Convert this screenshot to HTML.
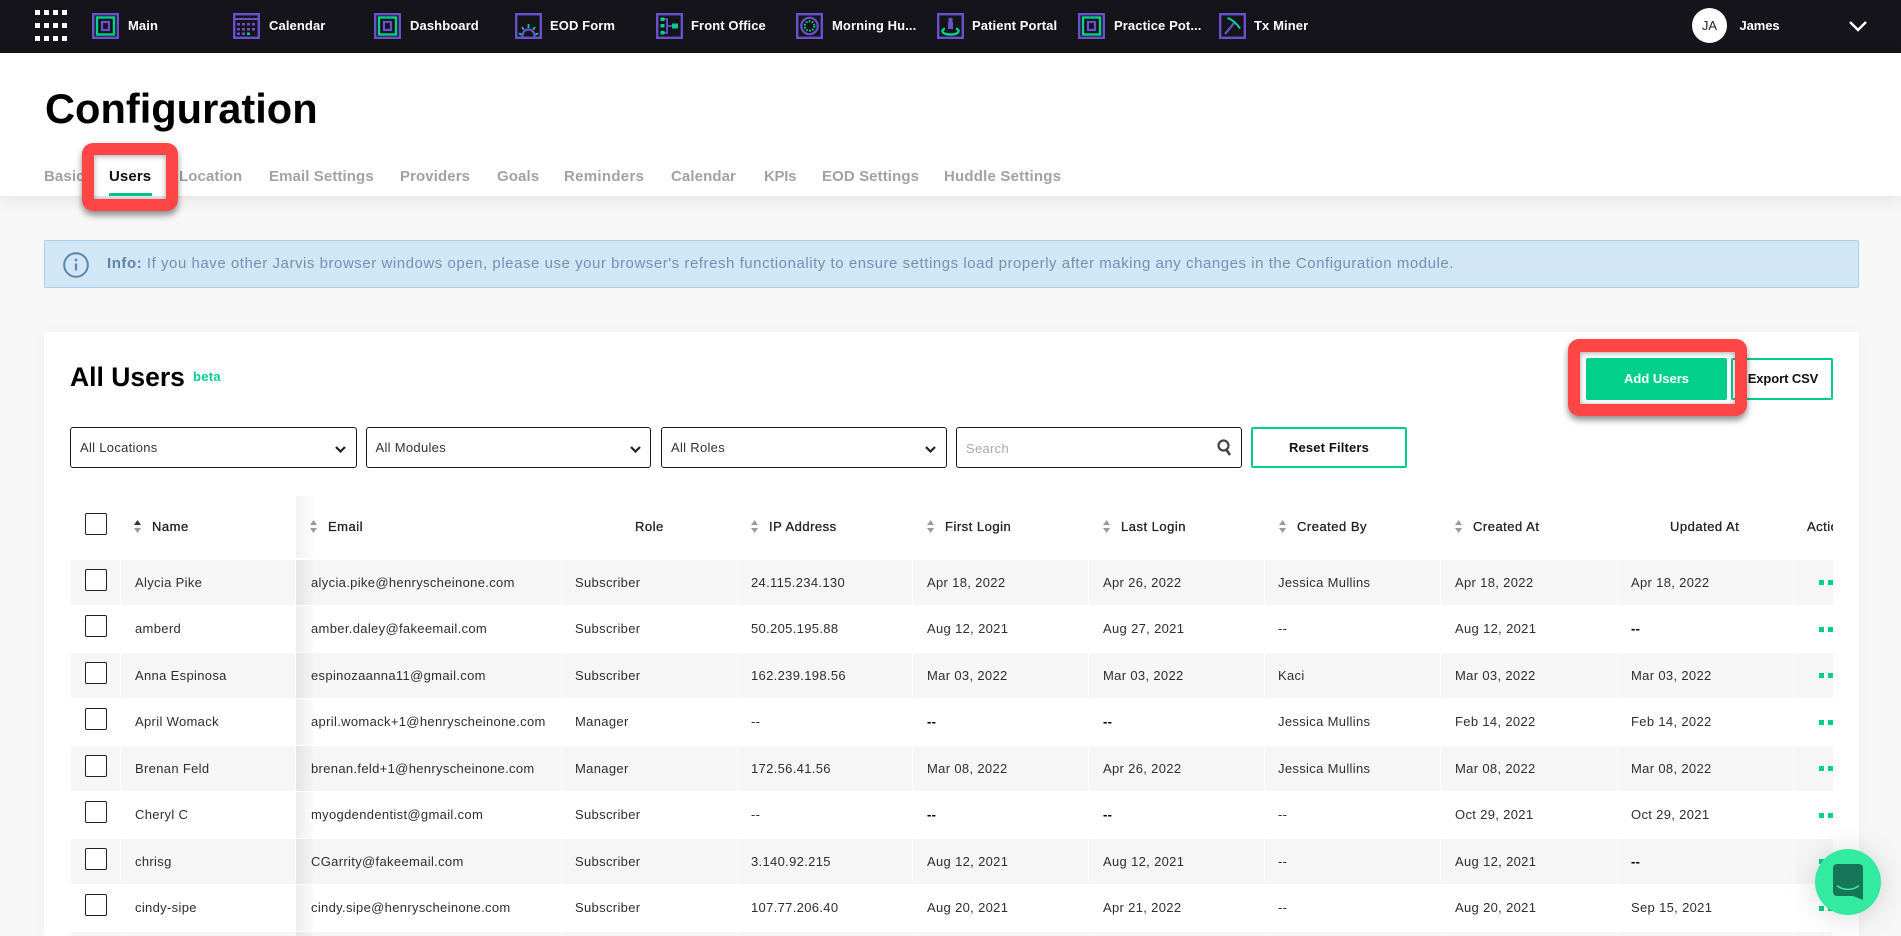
<!DOCTYPE html>
<html lang="en"><head><meta charset="utf-8"><title>Configuration</title>
<style>
*{box-sizing:border-box}
html,body{margin:0;padding:0}
body{width:1901px;height:936px;overflow:hidden;position:relative;background:#f7f7f7;font-family:"Liberation Sans",Arial,sans-serif;color:#2b2b2b}
.a{position:absolute}
#top{left:0;top:0;width:1901px;height:53px;background:#14141a}
.sq{position:absolute;width:5px;height:5px;background:#fff}
.ni{position:absolute;top:13px;width:27px;height:26px}
.nt{position:absolute;top:13px;line-height:26px;font-size:13px;font-weight:700;color:#fff;letter-spacing:.1px;white-space:nowrap}
#head{left:0;top:53px;width:1901px;height:143px;background:#fff;box-shadow:0 4px 14px rgba(0,0,0,.08)}
h1{position:absolute;left:45px;top:84px;margin:0;font-size:41.6px;line-height:50px;font-weight:700;color:#000}
.tab{position:absolute;top:166px;line-height:22px;font-size:15px;font-weight:700;color:#a2a2a2;letter-spacing:.1px;white-space:nowrap}
.red{position:absolute;border:12px solid #ff4646;border-radius:11px;box-shadow:0 4px 7px rgba(0,0,0,.45),inset 0 1px 6px rgba(0,0,0,.35)}
#info{left:44px;top:240px;width:1815px;height:48px;background:#d2e7f5;border:1px solid #a8cfeb;border-radius:2px}
#itext{left:107px;top:253px;line-height:22px;font-size:15px;color:#6f92b0;white-space:nowrap;letter-spacing:.54px}
#itext b{color:#5f83a6}
#card{left:44px;top:332px;width:1815px;height:604px;background:#fff;box-shadow:0 0 12px rgba(0,0,0,.03)}
.sel{position:absolute;top:427px;height:41px;width:287px;background:#fff;border:1.5px solid #1a1a1a;border-radius:3px}
.slab{position:absolute;top:437px;line-height:22px;font-size:13px;color:#333;letter-spacing:.3px;white-space:nowrap}
.btn{position:absolute;border:2px solid #00d08a;border-radius:2px;background:#fff;text-align:center;font-size:13px;font-weight:700;color:#111;white-space:nowrap}
.hd{position:absolute;top:516px;line-height:22px;font-size:13px;color:#222;letter-spacing:.5px;-webkit-text-stroke:.3px #222;white-space:nowrap}
.so{position:absolute;top:520px;width:7px;height:13px}
.cb{position:absolute;left:85px;width:22px;height:22px;background:#fff;border:1.5px solid #222;border-radius:2px}
.r{position:absolute;left:71px;width:1762px}
.g{background:#f6f6f6}
.sh{position:absolute;left:225px;top:0;bottom:0;width:20px;background:linear-gradient(90deg,rgba(0,0,0,.07),rgba(0,0,0,0))}
.vl{position:absolute;top:560px;height:376px;width:1px;background:#fff}
.t{position:absolute;font-size:13px;letter-spacing:.33px;color:#2e2e2e;white-space:nowrap}
.n{left:135px}.e{left:311px}.ro{left:575px}.ip{left:751px}.fl{left:927px}.ll{left:1103px}.cr{left:1278px}.ca{left:1455px}.ua{left:1631px}
.t b{color:#000}
.d{position:absolute;width:5px;height:5px;background:#00d08a}
</style></head><body>

<div class="a" id="top"></div>
<i class="sq" style="left:35px;top:10px"></i><i class="sq" style="left:44px;top:10px"></i><i class="sq" style="left:53px;top:10px"></i><i class="sq" style="left:62px;top:10px"></i>
<i class="sq" style="left:35px;top:23px"></i><i class="sq" style="left:44px;top:23px"></i><i class="sq" style="left:53px;top:23px"></i><i class="sq" style="left:62px;top:23px"></i>
<i class="sq" style="left:35px;top:36px"></i><i class="sq" style="left:44px;top:36px"></i><i class="sq" style="left:53px;top:36px"></i><i class="sq" style="left:62px;top:36px"></i>

<svg class="ni" style="left:92px" viewBox="0 0 27 26" fill="none"><rect x="1.2" y="1.2" width="24.6" height="23.6" stroke="#6a50cc" stroke-width="2.4"/><rect x="5" y="4.500" width="17" height="17" stroke="#00d08a" stroke-width="2.400"/><rect x="10" y="9" width="7" height="8" stroke="#6a50cc" stroke-width="2.200"/></svg>
<div class="nt" style="left:128px">Main</div>

<svg class="ni" style="left:233px" viewBox="0 0 27 26" fill="none"><rect x="1.2" y="1.2" width="24.6" height="23.6" stroke="#6a50cc" stroke-width="2.4"/><path d="M1 6h25" stroke="#6a50cc" stroke-width="2"/><g fill="#6a50cc"><rect x="4" y="10" width="3" height="2.500"/><rect x="9" y="10" width="3" height="2.500"/><rect x="14" y="10" width="3" height="2.500"/><rect x="19" y="10" width="3" height="2.500"/><rect x="4" y="15" width="3" height="2.500"/><rect x="9" y="15" width="3" height="2.500"/><rect x="14" y="15" width="3" height="2.500"/><rect x="19" y="15" width="3" height="2.500"/><rect x="4" y="19.500" width="3" height="2.500"/><rect x="9" y="19.500" width="3" height="2.500"/></g><rect x="14" y="19.500" width="3" height="2.500" fill="#00d08a"/></svg>
<div class="nt" style="left:269px">Calendar</div>

<svg class="ni" style="left:374px" viewBox="0 0 27 26" fill="none"><rect x="1.2" y="1.2" width="24.6" height="23.6" stroke="#6a50cc" stroke-width="2.4"/><rect x="5" y="4.500" width="17" height="17" stroke="#00d08a" stroke-width="2.400"/><rect x="10" y="9" width="7" height="8" stroke="#6a50cc" stroke-width="2.200"/></svg>
<div class="nt" style="left:410px">Dashboard</div>

<svg class="ni" style="left:515px" viewBox="0 0 27 26" fill="none"><rect x="1.2" y="1.2" width="24.6" height="23.6" stroke="#6a50cc" stroke-width="2.4"/><path d="M7.500 25v-2.500a6 6 0 0 1 12 0V25" stroke="#6a50cc" stroke-width="2.200"/><path d="M13.500 11v4M7 14l1.800 2.600M20 14l-1.800 2.600M4 20.500l2.500 1M23 20.500l-2.500 1" stroke="#00d08a" stroke-width="1.800"/></svg>
<div class="nt" style="left:550px">EOD Form</div>

<svg class="ni" style="left:656px" viewBox="0 0 27 26" fill="none"><rect x="1.2" y="1.2" width="24.6" height="23.6" stroke="#6a50cc" stroke-width="2.4"/><path d="M8 6h3v14H8M11 13h6" stroke="#6a50cc" stroke-width="1.800"/><rect x="4.500" y="4.500" width="4" height="3.500" fill="#00d08a"/><rect x="4.500" y="11" width="4" height="3.500" fill="#00d08a"/><rect x="4.500" y="18" width="4" height="3.500" fill="#00d08a"/><rect x="16" y="10.500" width="6" height="5" fill="#00d08a"/></svg>
<div class="nt" style="left:691px">Front Office</div>

<svg class="ni" style="left:796px" viewBox="0 0 27 26" fill="none"><rect x="1.2" y="1.2" width="24.6" height="23.6" stroke="#6a50cc" stroke-width="2.4"/><circle cx="13.500" cy="13" r="8.200" stroke="#6a50cc" stroke-width="2.200"/><circle cx="13.500" cy="13" r="4.800" stroke="#00d08a" stroke-width="2" stroke-dasharray="1.600 1.500"/></svg>
<div class="nt" style="left:832px">Morning Hu...</div>

<svg class="ni" style="left:937px" viewBox="0 0 27 26" fill="none"><rect x="1.2" y="1.2" width="24.6" height="23.6" stroke="#6a50cc" stroke-width="2.4"/><circle cx="13.500" cy="7" r="2.300" fill="#6a50cc"/><rect x="11" y="9" width="5" height="7" fill="#6a50cc"/><path d="M8 15.500C3.500 17 4.500 21.500 13.500 21.500S23.500 17 19 15.500" stroke="#00d08a" stroke-width="2.400"/></svg>
<div class="nt" style="left:972px">Patient Portal</div>

<svg class="ni" style="left:1078px" viewBox="0 0 27 26" fill="none"><rect x="1.2" y="1.2" width="24.6" height="23.6" stroke="#6a50cc" stroke-width="2.4"/><rect x="5" y="4.500" width="17" height="17" stroke="#00d08a" stroke-width="2.400"/><rect x="10" y="9" width="7" height="8" stroke="#6a50cc" stroke-width="2.200"/></svg>
<div class="nt" style="left:1114px">Practice Pot...</div>

<svg class="ni" style="left:1219px" viewBox="0 0 27 26" fill="none"><rect x="1.2" y="1.2" width="24.6" height="23.6" stroke="#6a50cc" stroke-width="2.4"/><path d="M6 21L15.500 9.500" stroke="#6a50cc" stroke-width="2.200"/><path d="M8.500 5C13 6.500 18 10.500 21 15.500" stroke="#00d08a" stroke-width="2"/></svg>
<div class="nt" style="left:1254px">Tx Miner</div>

<div class="a" style="left:1692px;top:8px;width:35px;height:35px;border-radius:50%;background:#fff;color:#222;text-align:center;line-height:35px;font-size:13px">JA</div>
<div class="nt" style="left:1739.500px;letter-spacing:-.1px">James</div>
<svg class="a" style="left:1848px;top:20px" width="20" height="12" viewBox="0 0 20 12" fill="none"><path d="M2 2l8 8 8-8" stroke="#fff" stroke-width="2.400"/></svg>

<div class="a" id="head"></div>
<h1>Configuration</h1>
<div class="tab" style="left:44px">Basic</div>
<div class="tab" style="left:109px;color:#111">Users</div>
<div class="a" style="left:109px;top:193px;width:43px;height:3px;background:#00c985"></div>
<div class="tab" style="left:179px">Location</div>
<div class="tab" style="left:269px">Email Settings</div>
<div class="tab" style="left:400px">Providers</div>
<div class="tab" style="left:497px">Goals</div>
<div class="tab" style="left:564px;letter-spacing:.3px">Reminders</div>
<div class="tab" style="left:671px">Calendar</div>
<div class="tab" style="left:764px;letter-spacing:-.3px">KPIs</div>
<div class="tab" style="left:822px">EOD Settings</div>
<div class="tab" style="left:944px;letter-spacing:.2px">Huddle Settings</div>
<div class="red" style="left:82px;top:143px;width:96px;height:68px"></div>

<div class="a" id="info"></div>
<svg class="a" style="left:63px;top:252px" width="26" height="26" viewBox="0 0 26 26" fill="none"><circle cx="13" cy="13" r="11.800" stroke="#5b86ad" stroke-width="2"/><path d="M13 11.500v7" stroke="#5b86ad" stroke-width="2.200"/><circle cx="13" cy="8" r="1.400" fill="#5b86ad"/></svg>
<div class="a" id="itext"><b>Info:</b> If you have other Jarvis browser windows open, please use your browser's refresh functionality to ensure settings load properly after making any changes in the Configuration module.</div>

<div class="a" id="card"></div>
<div class="a" style="left:70px;top:360px;font-size:26.500px;line-height:34px;font-weight:700;color:#000">All Users</div>
<div class="a" style="left:193px;top:368px;font-size:13px;line-height:17px;font-weight:700;color:#00d08a;letter-spacing:.3px">beta</div>

<div class="btn" style="left:1586px;top:358px;width:141px;height:42px;line-height:38px;background:#00d08a;color:#fff">Add Users</div>
<div class="btn" style="left:1731px;top:358px;width:102px;height:42px;line-height:38px;padding-left:2px;letter-spacing:-.1px">Export CSV</div>
<div class="red" style="left:1568px;top:339px;width:179px;height:77px;border-width:13px 12px 12px 12px"></div>

<div class="sel" style="left:70px"></div><div class="slab" style="left:80px">All Locations</div>
<svg class="a" style="left:335px;top:446px" width="11" height="7" viewBox="0 0 11 7" fill="none"><path d="M1 1l4.500 4.500L10 1" stroke="#222" stroke-width="2.200"/></svg>
<div class="sel" style="left:366px;width:285px"></div><div class="slab" style="left:375.500px">All Modules</div>
<svg class="a" style="left:630px;top:446px" width="11" height="7" viewBox="0 0 11 7" fill="none"><path d="M1 1l4.500 4.500L10 1" stroke="#222" stroke-width="2.200"/></svg>
<div class="sel" style="left:661px;width:286px"></div><div class="slab" style="left:671px">All Roles</div>
<svg class="a" style="left:925px;top:446px" width="11" height="7" viewBox="0 0 11 7" fill="none"><path d="M1 1l4.500 4.500L10 1" stroke="#222" stroke-width="2.200"/></svg>
<div class="sel" style="left:956px;width:286px"></div><div class="slab" style="left:966px;top:438px;color:#aaa">Search</div>
<svg class="a" style="left:1217px;top:439px" width="15" height="17" viewBox="0 0 15 17" fill="none"><circle cx="6.500" cy="6.500" r="5" stroke="#444" stroke-width="2.200"/><path d="M9.500 11l3.500 5" stroke="#444" stroke-width="2.600"/></svg>
<div class="btn" style="left:1251px;top:427px;width:156px;height:41px;line-height:37px;letter-spacing:.15px">Reset Filters</div>

<div class="a" style="left:296px;top:496px;width:20px;height:62px;background:linear-gradient(90deg,rgba(0,0,0,.055),rgba(0,0,0,0))"></div>
<div class="cb" style="top:513px"></div>
<svg class="so" style="left:134px" viewBox="0 0 7 13"><path d="M3.500 0L7 5H0z" fill="#333"/><path d="M3.500 13L7 8H0z" fill="#999"/></svg><div class="hd" style="left:152px">Name</div>
<svg class="so" style="left:310px" viewBox="0 0 7 13"><path d="M3.500 0L7 5H0z" fill="#999"/><path d="M3.500 13L7 8H0z" fill="#999"/></svg><div class="hd" style="left:328px">Email</div>
<div class="hd" style="left:635px">Role</div>
<svg class="so" style="left:751px" viewBox="0 0 7 13"><path d="M3.500 0L7 5H0z" fill="#999"/><path d="M3.500 13L7 8H0z" fill="#999"/></svg><div class="hd" style="left:769px">IP Address</div>
<svg class="so" style="left:927px" viewBox="0 0 7 13"><path d="M3.500 0L7 5H0z" fill="#999"/><path d="M3.500 13L7 8H0z" fill="#999"/></svg><div class="hd" style="left:945px">First Login</div>
<svg class="so" style="left:1103px" viewBox="0 0 7 13"><path d="M3.500 0L7 5H0z" fill="#999"/><path d="M3.500 13L7 8H0z" fill="#999"/></svg><div class="hd" style="left:1121px">Last Login</div>
<svg class="so" style="left:1279px" viewBox="0 0 7 13"><path d="M3.500 0L7 5H0z" fill="#999"/><path d="M3.500 13L7 8H0z" fill="#999"/></svg><div class="hd" style="left:1297px">Created By</div>
<svg class="so" style="left:1455px" viewBox="0 0 7 13"><path d="M3.500 0L7 5H0z" fill="#999"/><path d="M3.500 13L7 8H0z" fill="#999"/></svg><div class="hd" style="left:1473px">Created At</div>
<div class="hd" style="left:1670px">Updated At</div>
<div class="hd" style="left:1807px;width:26px;overflow:hidden">Actions</div>

<div class="r g" style="top:560px;height:45px"><div class="sh"></div></div>
<div class="r" style="top:606px;height:46px"><div class="sh"></div></div>
<div class="r g" style="top:653px;height:45px"><div class="sh"></div></div>
<div class="r" style="top:699px;height:46px"><div class="sh"></div></div>
<div class="r g" style="top:746px;height:45px"><div class="sh"></div></div>
<div class="r" style="top:792px;height:46px"><div class="sh"></div></div>
<div class="r g" style="top:839px;height:45px"><div class="sh"></div></div>
<div class="r" style="top:885px;height:46px"><div class="sh"></div></div>
<div class="r g" style="top:932px;height:4px"><div class="sh"></div></div>

<i class="vl" style="left:120px"></i><i class="vl" style="left:295px"></i><i class="vl" style="left:561px"></i><i class="vl" style="left:737px"></i><i class="vl" style="left:912px"></i><i class="vl" style="left:1088px"></i><i class="vl" style="left:1264px"></i><i class="vl" style="left:1440px"></i><i class="vl" style="left:1617px"></i><i class="vl" style="left:1793px"></i>

<div class="cb" style="top:569px"></div><div class="cb" style="top:615px"></div><div class="cb" style="top:662px"></div><div class="cb" style="top:708px"></div><div class="cb" style="top:755px"></div><div class="cb" style="top:801px"></div><div class="cb" style="top:848px"></div><div class="cb" style="top:894px"></div>

<div class="a" style="left:0;top:560px;width:1901px;height:45px;line-height:45px"><span class="t n">Alycia Pike</span><span class="t e">alycia.pike@henryscheinone.com</span><span class="t ro">Subscriber</span><span class="t ip">24.115.234.130</span><span class="t fl">Apr 18, 2022</span><span class="t ll">Apr 26, 2022</span><span class="t cr">Jessica Mullins</span><span class="t ca">Apr 18, 2022</span><span class="t ua">Apr 18, 2022</span><i class="d" style="left:1819px;top:20px"></i><i class="d" style="left:1828px;top:20px"></i></div>
<div class="a" style="left:0;top:606px;width:1901px;height:46px;line-height:46px"><span class="t n">amberd</span><span class="t e">amber.daley@fakeemail.com</span><span class="t ro">Subscriber</span><span class="t ip">50.205.195.88</span><span class="t fl">Aug 12, 2021</span><span class="t ll">Aug 27, 2021</span><span class="t cr">--</span><span class="t ca">Aug 12, 2021</span><span class="t ua"><b>--</b></span><i class="d" style="left:1819px;top:21px"></i><i class="d" style="left:1828px;top:21px"></i></div>
<div class="a" style="left:0;top:653px;width:1901px;height:45px;line-height:45px"><span class="t n">Anna Espinosa</span><span class="t e">espinozaanna11@gmail.com</span><span class="t ro">Subscriber</span><span class="t ip">162.239.198.56</span><span class="t fl">Mar 03, 2022</span><span class="t ll">Mar 03, 2022</span><span class="t cr">Kaci</span><span class="t ca">Mar 03, 2022</span><span class="t ua">Mar 03, 2022</span><i class="d" style="left:1819px;top:20px"></i><i class="d" style="left:1828px;top:20px"></i></div>
<div class="a" style="left:0;top:699px;width:1901px;height:46px;line-height:46px"><span class="t n">April Womack</span><span class="t e">april.womack+1@henryscheinone.com</span><span class="t ro">Manager</span><span class="t ip">--</span><span class="t fl"><b>--</b></span><span class="t ll"><b>--</b></span><span class="t cr">Jessica Mullins</span><span class="t ca">Feb 14, 2022</span><span class="t ua">Feb 14, 2022</span><i class="d" style="left:1819px;top:21px"></i><i class="d" style="left:1828px;top:21px"></i></div>
<div class="a" style="left:0;top:746px;width:1901px;height:45px;line-height:45px"><span class="t n">Brenan Feld</span><span class="t e">brenan.feld+1@henryscheinone.com</span><span class="t ro">Manager</span><span class="t ip">172.56.41.56</span><span class="t fl">Mar 08, 2022</span><span class="t ll">Apr 26, 2022</span><span class="t cr">Jessica Mullins</span><span class="t ca">Mar 08, 2022</span><span class="t ua">Mar 08, 2022</span><i class="d" style="left:1819px;top:20px"></i><i class="d" style="left:1828px;top:20px"></i></div>
<div class="a" style="left:0;top:792px;width:1901px;height:46px;line-height:46px"><span class="t n">Cheryl C</span><span class="t e">myogdendentist@gmail.com</span><span class="t ro">Subscriber</span><span class="t ip">--</span><span class="t fl"><b>--</b></span><span class="t ll"><b>--</b></span><span class="t cr">--</span><span class="t ca">Oct 29, 2021</span><span class="t ua">Oct 29, 2021</span><i class="d" style="left:1819px;top:21px"></i><i class="d" style="left:1828px;top:21px"></i></div>
<div class="a" style="left:0;top:839px;width:1901px;height:45px;line-height:45px"><span class="t n">chrisg</span><span class="t e">CGarrity@fakeemail.com</span><span class="t ro">Subscriber</span><span class="t ip">3.140.92.215</span><span class="t fl">Aug 12, 2021</span><span class="t ll">Aug 12, 2021</span><span class="t cr">--</span><span class="t ca">Aug 12, 2021</span><span class="t ua"><b>--</b></span><i class="d" style="left:1819px;top:20px"></i><i class="d" style="left:1828px;top:20px"></i></div>
<div class="a" style="left:0;top:885px;width:1901px;height:46px;line-height:46px"><span class="t n">cindy-sipe</span><span class="t e">cindy.sipe@henryscheinone.com</span><span class="t ro">Subscriber</span><span class="t ip">107.77.206.40</span><span class="t fl">Aug 20, 2021</span><span class="t ll">Apr 21, 2022</span><span class="t cr">--</span><span class="t ca">Aug 20, 2021</span><span class="t ua">Sep 15, 2021</span><i class="d" style="left:1819px;top:21px"></i><i class="d" style="left:1828px;top:21px"></i></div>

<div class="a" style="left:1815px;top:849px;width:66px;height:66px;border-radius:50%;background:#33eba0;box-shadow:0 2px 30px rgba(0,0,0,.16)"></div>
<svg class="a" style="left:1833px;top:864px" width="30" height="36" viewBox="0 0 30 36"><path d="M4 0h22a4 4 0 0 1 4 4v32l-10-4H4a4 4 0 0 1-4-4V4a4 4 0 0 1 4-4z" fill="#177558"/><path d="M4.500 22c6 4.500 15 4.500 21 0" fill="none" stroke="#33eba0" stroke-width="1.600" stroke-linecap="round"/></svg>
</body></html>
